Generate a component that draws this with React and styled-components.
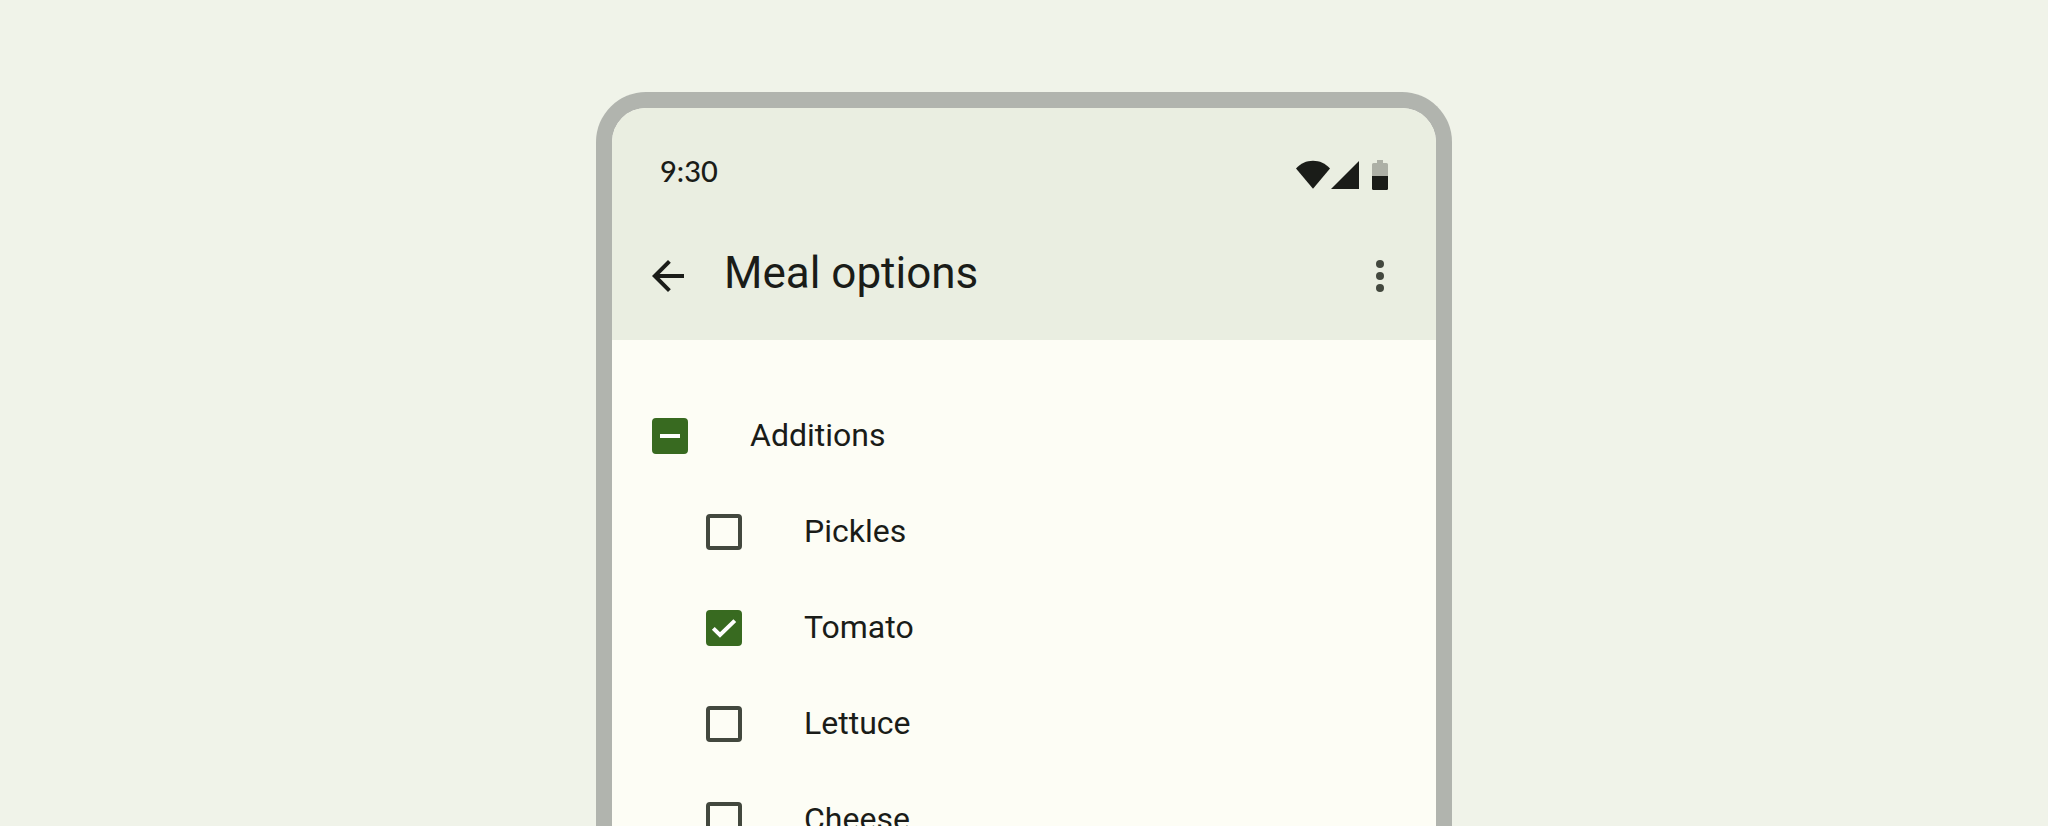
import React, { useEffect, useRef, useState } from "react";
import styled, { createGlobalStyle } from "styled-components";

const color = {
  page: "#f0f3e9",
  frame: "#b1b4ae",
  bar: "#eaeee1",
  surface: "#fdfdf5",
  ink: "#1a1c18",
  outline: "#43483e",
  primary: "#386a20",
};

const GlobalStyle = createGlobalStyle`
  *, *::before, *::after { box-sizing: border-box; }
  body {
    margin: 0;
    background: ${color.page};
    color: ${color.ink};
    font-family: Roboto, "Liberation Sans", sans-serif;
  }
`;

const Page = styled.main`
  display: flex;
  flex-direction: column;
  align-items: center;
  height: 100vh;
  padding-top: 92px;
  overflow: hidden;
`;

const Phone = styled.section`
  flex: 1;
  min-height: 0;
  width: 100%;
  max-width: 856px;
  border: 16px solid ${color.frame};
  border-bottom: 0;
  border-radius: 50px 50px 0 0;
  background: ${color.surface};
  overflow: hidden;
`;

const Header = styled.header`
  background: ${color.bar};
`;

const StatusBar = styled.div`
  display: flex;
  align-items: flex-end;
  justify-content: space-between;
  height: 104px;
  padding: 0 48px 20px;
`;

const Time = styled.time`
  font-family: Lato, sans-serif;
  font-size: 29px;
  font-weight: 500;
  line-height: 42px;
`;

const StatusIcons = styled.svg`
  display: block;
  width: 92px;
  height: 32px;
`;

const AppBar = styled.div`
  display: flex;
  align-items: flex-start;
  gap: 32px;
  padding: 40px 32px;
`;

const IconButton = styled.button`
  display: grid;
  flex: none;
  width: 48px;
  height: 48px;
  padding: 0;
  border: 0;
  background: none;
  color: ${(p) => p.$color};
  cursor: pointer;

  svg {
    width: 100%;
    height: 100%;
    fill: currentColor;
  }
`;

const Title = styled.h1`
  flex: 1;
  margin: 0;
  font-size: 44px;
  font-weight: 400;
  line-height: 42px;
`;

const OptionList = styled.ul`
  margin: 0;
  padding: ${(p) => (p.$nested ? "0" : "48px 0")};
  list-style: none;
`;

const OptionLabel = styled.label`
  display: flex;
  align-items: center;
  gap: 62px;
  height: 96px;
  padding-left: ${(p) => (p.$nested ? "94px" : "40px")};
  cursor: pointer;
`;

const OptionText = styled.span`
  padding-bottom: 2px;
  font-size: 32px;
  line-height: 40px;
`;

const CheckFrame = styled.span`
  display: grid;
  flex: none;
  width: 36px;
  height: 36px;

  > * {
    grid-area: 1 / 1;
  }
`;

const CheckInput = styled.input`
  appearance: none;
  width: 36px;
  height: 36px;
  margin: 0;
  border: 4px solid ${color.outline};
  border-radius: 4px;
  cursor: pointer;

  &:checked,
  &:indeterminate {
    border-color: ${color.primary};
    background: ${color.primary};
  }
`;

const CheckMark = styled.svg`
  width: 36px;
  height: 36px;
  fill: none;
  stroke: #ffffff;
  stroke-width: 4;
  pointer-events: none;
`;

function Checkbox({ checked, indeterminate = false, onChange }) {
  const ref = useRef(null);
  useEffect(() => {
    ref.current.indeterminate = indeterminate;
  }, [indeterminate]);

  return (
    <CheckFrame>
      <CheckInput ref={ref} type="checkbox" checked={checked} onChange={onChange} />
      {indeterminate && (
        <CheckMark viewBox="0 0 36 36" aria-hidden="true">
          <path d="M8 18h20" />
        </CheckMark>
      )}
      {checked && !indeterminate && (
        <CheckMark viewBox="0 0 36 36" aria-hidden="true">
          <path d="M7.3 18.3 14 25 28.8 10.6" />
        </CheckMark>
      )}
    </CheckFrame>
  );
}

function Option({ label, nested, ...box }) {
  return (
    <OptionLabel $nested={nested}>
      <Checkbox {...box} />
      <OptionText>{label}</OptionText>
    </OptionLabel>
  );
}

export default function App() {
  const [items, setItems] = useState([
    { name: "Pickles", on: false },
    { name: "Tomato", on: true },
    { name: "Lettuce", on: false },
    { name: "Cheese", on: false },
  ]);
  const all = items.every((i) => i.on);
  const some = items.some((i) => i.on);
  const toggle = (name) =>
    setItems(items.map((i) => (i.name === name ? { ...i, on: !i.on } : i)));
  const toggleAll = () => setItems(items.map((i) => ({ ...i, on: !all })));

  return (
    <>
      <GlobalStyle />
      <Page>
        <Phone>
          <Header>
            <StatusBar>
              <Time>9:30</Time>
              <StatusIcons viewBox="0 0 92 32" fill={color.ink} aria-hidden="true">
                <path d="M17 28.7 0 8.4C4.5 3.4 10.5 .7 17 .7s12.5 2.7 17 7.7z" />
                <path d="M35 29 63 1v28z" />
                <path
                  d="M81 0h6v3h3.5a1.5 1.5 0 0 1 1.5 1.5V16H76V4.5A1.5 1.5 0 0 1 77.5 3H81z"
                  fill="#adb0a6"
                />
                <path d="M76 16h16v12.5a1.5 1.5 0 0 1-1.5 1.5h-13a1.5 1.5 0 0 1-1.5-1.5z" />
              </StatusIcons>
            </StatusBar>
            <AppBar>
              <IconButton type="button" aria-label="Back" $color={color.ink}>
                <svg viewBox="0 0 24 24" aria-hidden="true">
                  <path d="M20 11H7.83l5.59-5.59L12 4l-8 8 8 8 1.41-1.41L7.83 13H20z" />
                </svg>
              </IconButton>
              <Title>Meal options</Title>
              <IconButton type="button" aria-label="More options" $color={color.outline}>
                <svg viewBox="0 0 24 24" aria-hidden="true">
                  <circle cx="12" cy="6" r="2" />
                  <circle cx="12" cy="12" r="2" />
                  <circle cx="12" cy="18" r="2" />
                </svg>
              </IconButton>
            </AppBar>
          </Header>
          <OptionList>
            <li>
              <Option
                label="Additions"
                checked={all}
                indeterminate={some && !all}
                onChange={toggleAll}
              />
              <OptionList $nested>
                {items.map((item) => (
                  <li key={item.name}>
                    <Option
                      nested
                      label={item.name}
                      checked={item.on}
                      onChange={() => toggle(item.name)}
                    />
                  </li>
                ))}
              </OptionList>
            </li>
          </OptionList>
        </Phone>
      </Page>
    </>
  );
}
